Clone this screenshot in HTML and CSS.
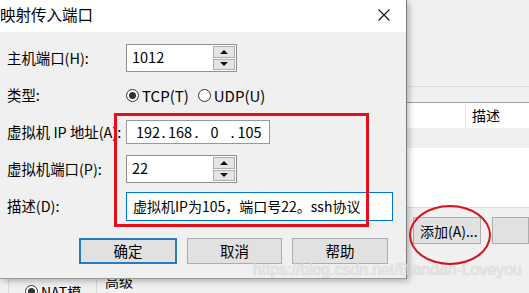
FILE: index.html
```html
<!DOCTYPE html>
<html lang="zh-CN">
<head>
    <meta charset="UTF-8">
    <title>映射传入端口</title>
    <link rel="stylesheet" href="styles.css">
</head>
<body>
    <div class="desktop">
        <!-- window behind the dialog -->
        <div class="host">
            <div class="host-top"></div>
            <div class="host-list">
                <div class="list-head">
                    <div class="col-main"></div>
                    <div class="col-desc">描述</div>
                </div>
                <div class="list-strip"></div>
                <div class="list-body"></div>
            </div>
            <div class="host-actions">
                <button class="btn host-btn">添加(A)...</button>
                <button class="btn host-btn-next"></button>
            </div>
            <div class="host-bottom">
                <div class="nat-box"><span class="radio on"></span>NAT模</div>
                <div class="adv">高级</div>
            </div>
        </div>

        <!-- dialog -->
        <div class="dialog">
            <div class="title-bar">
                <span class="title">映射传入端口</span>
                <svg class="close" width="12" height="12" viewBox="0 0 12 12">
                    <path d="M0.5 0.5 L11.5 11.5 M11.5 0.5 L0.5 11.5" stroke="#111" stroke-width="1.1" fill="none"/>
                </svg>
            </div>
            <div class="dialog-body">
                <div class="row row-host">
                    <label>主机端口(H):</label>
                    <div class="spin">
                        <div class="spin-value">1012</div>
                        <div class="spin-btns">
                            <span class="spin-btn"><i class="arrow up"></i></span>
                            <span class="spin-btn"><i class="arrow down"></i></span>
                        </div>
                    </div>
                </div>
                <div class="row row-type">
                    <label>类型:</label>
                    <div class="radios">
                        <span class="radio-item"><span class="radio on"></span>TCP(T)</span>
                        <span class="radio-item"><span class="radio"></span>UDP(U)</span>
                    </div>
                </div>
                <div class="row row-ip">
                    <label>虚拟机 IP 地址(A):</label>
                    <div class="ip-box">
                        <span class="seg s1">192</span><span class="dot">.</span>
                        <span class="seg s2">168</span><span class="dot">.</span>
                        <span class="seg s3">0</span><span class="dot">.</span>
                        <span class="seg s4">105</span>
                    </div>
                </div>
                <div class="row row-port">
                    <label>虚拟机端口(P):</label>
                    <div class="spin">
                        <div class="spin-value">22</div>
                        <div class="spin-btns">
                            <span class="spin-btn"><i class="arrow up"></i></span>
                            <span class="spin-btn"><i class="arrow down"></i></span>
                        </div>
                    </div>
                </div>
                <div class="row row-desc">
                    <label>描述(D):</label>
                    <div class="desc-box">虚拟机IP为105，端口号22。ssh协议</div>
                </div>
                <div class="dialog-buttons">
                    <button class="btn btn-default">确定</button>
                    <button class="btn btn-cancel">取消</button>
                    <button class="btn btn-help">帮助</button>
                </div>
            </div>
        </div>

        <!-- red annotations -->
        <div class="mark-rect"></div>
        <div class="mark-ellipse"></div>
        <div class="watermark">https://blog.csdn.net/Biandan-Loveyou</div>
    </div>
</body>
</html>
```

FILE: styles.css
```css
* {
    margin: 0;
    padding: 0;
    box-sizing: border-box;
}

body {
    width: 529px;
    height: 293px;
    overflow: hidden;
    background: #f0f0f0;
    font-family: "Noto Sans CJK SC", sans-serif;
    font-size: 14px;
    color: #000;
}

.desktop {
    position: relative;
    width: 529px;
    height: 293px;
    overflow: hidden;
}

/* background window */
.host {
    display: flex;
    flex-direction: column;
    height: 293px;
    background: #f0f0f0;
}

.host-top {
    height: 87px;
    border-bottom: 1px solid #dcdcdc;
    flex-shrink: 0;
}

.host-list {
    margin-top: 15px;
    border-top: 1px solid #a0a0a0;
    flex-shrink: 0;
}

.list-head {
    display: flex;
    height: 25px;
    background: #fff;
}

.col-main {
    width: 465px;
}

.col-desc {
    flex: 1;
    border-left: 1px solid #e5e5e5;
    padding-left: 6px;
    line-height: 25px;
}

.list-strip {
    height: 20px;
    background: #f0f0f0;
}

.list-body {
    height: 60px;
    background: #fff;
    border-bottom: 1px solid #dadada;
}

.host-actions {
    display: flex;
    gap: 11px;
    padding: 9px 0 17px 413px;
    flex-shrink: 0;
}

.btn {
    font-family: "Noto Sans CJK SC", sans-serif;
    font-size: 14px;
    color: #000;
    background: #e1e1e1;
    border: 1px solid #adadad;
    line-height: 1;
    white-space: nowrap;
}

.host-btn {
    width: 81px;
    height: 27px;
    text-align: left;
    padding: 0 2px 0 6px;
}

.host-btn-next {
    width: 60px;
    height: 27px;
}

.host-bottom {
    display: flex;
    flex: 1;
}

.nat-box {
    display: flex;
    align-items: flex-start;
    margin-left: 8px;
    width: 89px;
    border-left: 1px solid #dadada;
    border-right: 1px solid #dadada;
    padding: 24px 0 0 16px;
    line-height: 14px;
}

.nat-box .radio {
    margin-right: 3px;
}

.adv {
    padding: 13px 0 0 8px;
    line-height: 14px;
}

/* dialog */
.dialog {
    position: absolute;
    left: 0;
    top: 0;
    width: 407px;
    height: 279px;
    background: #f0f0f0;
    border-right: 1px solid #7c7c7c;
    border-bottom: 1px solid #9a9a9a;
    box-shadow: 2px 2px 6px rgba(0, 0, 0, 0.28);
}

.title-bar {
    display: flex;
    justify-content: space-between;
    align-items: center;
    height: 32px;
    background: #fff;
    padding: 0 16px 0 0;
}

.title {
    font-size: 15.5px;
    line-height: 1;
    margin-top: -2px;
}

.close {
    display: block;
    margin-top: -2px;
}

.dialog-body {
    padding: 12px 0 0 7px;
}

.row {
    display: grid;
    grid-template-columns: 119px auto;
    align-items: center;
}

.row label {
    line-height: 1;
    font-size: 14.4px;
}

.row-type {
    margin-top: 13px;
    height: 20px;
}

.row-ip {
    margin-top: 15px;
}

.row-port {
    margin-top: 11px;
}

.row-desc {
    margin-top: 9px;
}

/* spin box */
.spin {
    display: flex;
    width: 111px;
    height: 28px;
    background: #fff;
    border: 1px solid #8f8f8f;
}

.spin-value {
    flex: 1;
    padding-left: 5px;
    line-height: 24px;
    font-size: 14.5px;
}

.spin-btns {
    display: flex;
    flex-direction: column;
    gap: 1px;
    width: 23px;
    padding: 1px 1px 1px 0;
}

.spin-btn {
    flex: 1;
    display: flex;
    align-items: center;
    justify-content: center;
    background: #e5e5e5;
    border: 1px solid #adadad;
}

.arrow {
    width: 0;
    height: 0;
    border-left: 4px solid transparent;
    border-right: 4px solid transparent;
}

.arrow.up {
    border-bottom: 4px solid #111;
}

.arrow.down {
    border-top: 4px solid #111;
}

/* radios */
.radios {
    display: flex;
    gap: 9px;
    font-size: 15px;
}

.radio-item {
    display: flex;
    align-items: center;
    line-height: 1;
}

.radio {
    display: inline-block;
    width: 13px;
    height: 13px;
    border: 1px solid #333;
    border-radius: 50%;
    background: #fff;
    margin-right: 3px;
    position: relative;
    flex-shrink: 0;
}

.radio.on::after {
    content: "";
    position: absolute;
    left: 2px;
    top: 2px;
    width: 7px;
    height: 7px;
    border-radius: 50%;
    background: #333;
}

/* ip box */
.ip-box {
    display: flex;
    width: 144px;
    height: 24px;
    background: #fff;
    border: 1px solid #999;
    padding-left: 8px;
    line-height: 22px;
    font-size: 14.5px;
}

.seg {
    text-align: center;
}

.s1 { width: 26px; }
.s2 { width: 28px; }
.s3 { width: 31px; }
.s4 { width: 29px; }

.dot {
    width: 5px;
    text-align: center;
}

/* description */
.desc-box {
    width: 267px;
    height: 29px;
    background: #fff;
    border: 1px solid #0078d7;
    padding-left: 6px;
    line-height: 26px;
    font-size: 14px;
}

/* buttons */
.dialog-buttons {
    display: flex;
    gap: 10px;
    margin: 17px 0 0 72px;
}

.dialog-buttons .btn {
    height: 26px;
    font-size: 14.5px;
}

.btn-default {
    width: 98px;
    border: 2px solid #2a7cc0;
}

.btn-cancel {
    width: 95px;
}

.btn-help {
    width: 96px;
}

/* annotations over the screenshot */
.mark-rect {
    position: absolute;
    left: 114px;
    top: 113px;
    width: 255px;
    height: 114px;
    border: 3px solid #e3101a;
}

.mark-ellipse {
    position: absolute;
    left: 409px;
    top: 205px;
    width: 82px;
    height: 60px;
    border: 2.5px solid #d4151c;
    border-radius: 50%;
}

.watermark {
    position: absolute;
    left: 253px;
    top: 261px;
    font-family: "Liberation Sans", sans-serif;
    font-size: 15.8px;
    color: rgba(255, 255, 255, 0.6);
    text-shadow: 0 0 1px rgba(120, 120, 120, 0.5);
    white-space: nowrap;
}
```
